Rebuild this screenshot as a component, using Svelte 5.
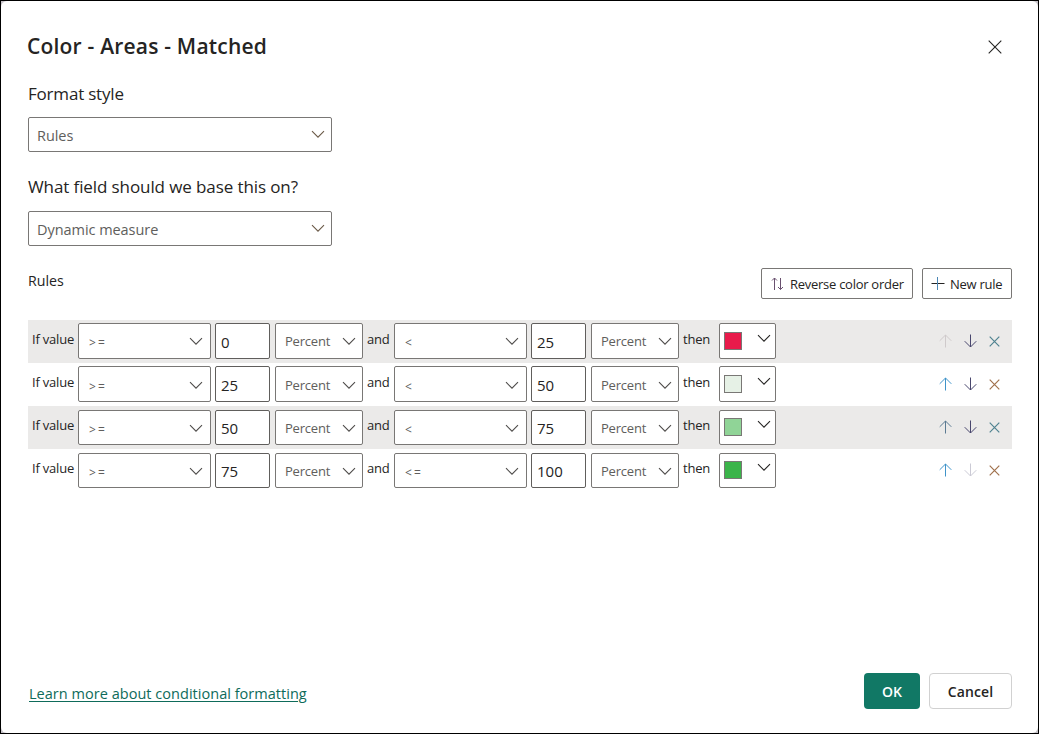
<script>
  const rules = [
    { lowOp: '>=', low: '0', highOp: '<', high: '25', color: '#e81b4b' },
    { lowOp: '>=', low: '25', highOp: '<', high: '50', color: '#e6f1e6' },
    { lowOp: '>=', low: '50', highOp: '<', high: '75', color: '#90d497' },
    { lowOp: '>=', low: '75', highOp: '<=', high: '100', color: '#3bb44a' }
  ];
  const upColors = ['#8a7a80', '#3f93c9', '#5b7a92', '#3f93c9'];
  const crossColors = ['#4f8290', '#a0714c', '#4f8290', '#a0714c'];
</script>

{#snippet chevron()}
  <svg class="chevron" width="14" height="9" viewBox="0 0 14 9"><path d="M1 1.2 7 7.2 13 1.2" /></svg>
{/snippet}

{#snippet select(text, kind)}
  <div class="select {kind}"><span>{text}</span>{@render chevron()}</div>
{/snippet}

<div class="frame">
  <main class="dialog">
    <header>
      <h1>Color - Areas - Matched</h1>
      <svg class="close" width="14" height="14" viewBox="0 0 14 14"><path d="M.7.7 13.3 13.3M13.3.7.7 13.3" /></svg>
    </header>

    <p class="label style-label">Format style</p>
    {@render select('Rules', 'wide')}
    <p class="label field-label">What field should we base this on?</p>
    {@render select('Dynamic measure', 'wide')}

    <div class="toolbar">
      <span class="rules-title">Rules</span>
      <button class="reverse">
        <svg width="12" height="14" viewBox="0 0 12 14"><path d="M3.5 13V1M1 3.5 3.5 1 6 3.5" stroke="#69506f" /><path d="M9.5 1v11.5M7 10l2.5 2.5L12 10" stroke="#69506f" /></svg>
        <span>Reverse color order</span>
      </button>
      <button class="new">
        <svg width="14" height="14" viewBox="0 0 14 14"><path d="M.5 6.5h13" stroke="#252423" /><path d="M6.5 0v13" stroke="#4b86b4" /></svg>
        <span>New rule</span>
      </button>
    </div>

    <section class="rules">
      {#each rules as rule, i}
        <div class="row">
          <span class="word if">If value</span>
          {@render select(rule.lowOp, 'op')}
          <div class="number">{rule.low}</div>
          {@render select('Percent', 'unit')}
          <span class="word and">and</span>
          {@render select(rule.highOp, 'op')}
          <div class="number">{rule.high}</div>
          {@render select('Percent', 'unit')}
          <span class="word then">then</span>
          <div class="color"><i style:background={rule.color}></i>{@render chevron()}</div>
          <div class="actions">
            <svg class:off={i === 0} width="13" height="14" viewBox="0 0 13 14"><path d="M6.5 13.5V1M.7 6.8 6.5 1l5.8 5.8" stroke={upColors[i]} /></svg>
            <svg class:off={i === rules.length - 1} width="13" height="14" viewBox="0 0 13 14"><path d="M6.5.5V13M.7 7.2 6.5 13l5.8-5.8" stroke="#48466d" /></svg>
            <svg width="11" height="11" viewBox="0 0 11 11"><path d="m.7.7 9.6 9.6M10.3.7.7 10.3" stroke={crossColors[i]} stroke-width="1.2" /></svg>
          </div>
        </div>
      {/each}
    </section>

    <footer>
      <a href="#learn">Learn more about conditional formatting</a>
      <button class="ok"><span>OK</span></button>
      <button class="cancel"><span>Cancel</span></button>
    </footer>
  </main>
</div>

<style>
  :global(body) { margin: 0; background: #fff; }
  * { box-sizing: border-box; }
  .frame { width: 1039px; height: 734px; border: 1px solid #000; background: #c4c0c6; }
  .dialog {
    height: 100%; background: #fff; border-radius: 6px;
    padding: 0 26px 0 27px; display: flex; flex-direction: column;
    font-family: "Open Sans", "Noto Sans", sans-serif; color: #252423; overflow: hidden;
  }
  svg { display: block; fill: none; flex: none; }
  header { display: flex; justify-content: space-between; height: 80px; padding-top: 30px; }
  h1 { margin: 0 0 0 -1px; font-size: 21px; line-height: 30px; font-weight: 600; letter-spacing: .2px; white-space: nowrap; }
  .close { margin: 9px 10px 0 0; stroke: #252423; stroke-width: 1.1; }
  .label { margin: 0; font-size: 17px; line-height: 26px; height: 36px; letter-spacing: -.1px; white-space: nowrap; }
  .style-label { letter-spacing: -.2px; }
  .field-label { margin-top: 22px; height: 37px; }
  .select {
    display: flex; align-items: center; justify-content: space-between; flex: none;
    border: 1px solid #797775; border-radius: 2px; background: #fff; color: #605e5c;
  }
  .chevron { stroke: #4f4d4b; stroke-width: 1.1; }
  .wide { width: 304px; height: 35px; padding: 0 6px 0 8px; font-size: 14.5px; letter-spacing: -.05px; }
  .wide span { padding-top: 2px; }
  .wide .chevron { stroke: #6b5a48; }
  .toolbar { display: flex; height: 31px; margin-top: 22px; }
  .rules-title { font-size: 14.2px; line-height: 26px; margin-right: auto; }
  button { display: flex; align-items: center; margin: 0; background: #fff; font-family: inherit; color: #252423; white-space: nowrap; }
  .reverse, .new { height: 31px; border: 1px solid #797775; border-radius: 2px; font-size: 13px; letter-spacing: -.27px; padding: 0 9px; }
  .reverse { width: 152px; gap: 7px; margin-right: 9px; }
  .new { width: 90px; padding-left: 8px; gap: 5px; }
  .rules { margin-top: 21px; }
  .row { display: flex; height: 43px; padding: 3px 10px 0 4px; font-size: 13px; }
  .row:nth-child(odd) { background: #ebeae9; }
  .word { line-height: 33px; letter-spacing: -.2px; white-space: nowrap; flex: none; }
  .if { width: 46px; }
  .and { width: 31px; padding-left: 4px; }
  .then { width: 40px; padding-left: 4px; }
  .op { width: 133px; height: 36px; padding: 0 7px 0 10px; margin-right: 4px; font-size: 12px; letter-spacing: 2.2px; }
  .op span { padding-top: 2px; }
  .unit { width: 88px; height: 36px; padding: 0 6px 0 9px; letter-spacing: -.2px; }
  .number {
    width: 55px; height: 36px; margin-right: 5px; padding: 2px 0 0 5px; flex: none;
    border: 1px solid #605e5c; border-radius: 2px; background: #fff; font-size: 15px; line-height: 33px;
  }
  .color {
    display: flex; justify-content: space-between; width: 57px; height: 36px; flex: none;
    border: 1px solid #797775; border-radius: 2px; padding: 8px 4px 0; background: #fff;
  }
  .color i { width: 18px; height: 18px; border: 1px solid #797775; }
  .color .chevron { margin-top: 2px; stroke: #252423; }
  .actions { display: flex; gap: 12px; margin-left: auto; padding: 11px 2px 0 0; }
  .actions svg:last-child { margin-top: 2px; }
  .row:nth-child(2) .select { padding-top: 2px; }
  .row:nth-child(n+3) { padding-top: 4px; }
  .row:nth-child(n+3) .select { height: 35px; padding-top: 1px; }
  .row:nth-child(n+3) .number { height: 35px; padding-top: 1px; }
  .row:nth-child(n+3) .color { height: 35px; padding-top: 7px; }
  .row:nth-child(n+3) .word { line-height: 31px; }
  .row:nth-child(n+3) .actions { padding-top: 10px; }
  .off { opacity: .28; }
  footer { display: flex; margin-top: auto; height: 60px; align-items: flex-start; }
  a { color: #0e6b5a; font-size: 14.5px; line-height: 20px; letter-spacing: .03px; margin: 11px auto 0 1px; white-space: nowrap; text-underline-offset: 2px; text-decoration-thickness: 1px; }
  .ok, .cancel { height: 36px; justify-content: center; border-radius: 4px; font-size: 14px; font-weight: 600; padding: 1px 0 0; }
  .ok { width: 56px; border: 0; background: #117865; color: #fff; margin-right: 9px; }
  .cancel { width: 83px; border: 1px solid #d1d1d1; letter-spacing: .15px; }
</style>
